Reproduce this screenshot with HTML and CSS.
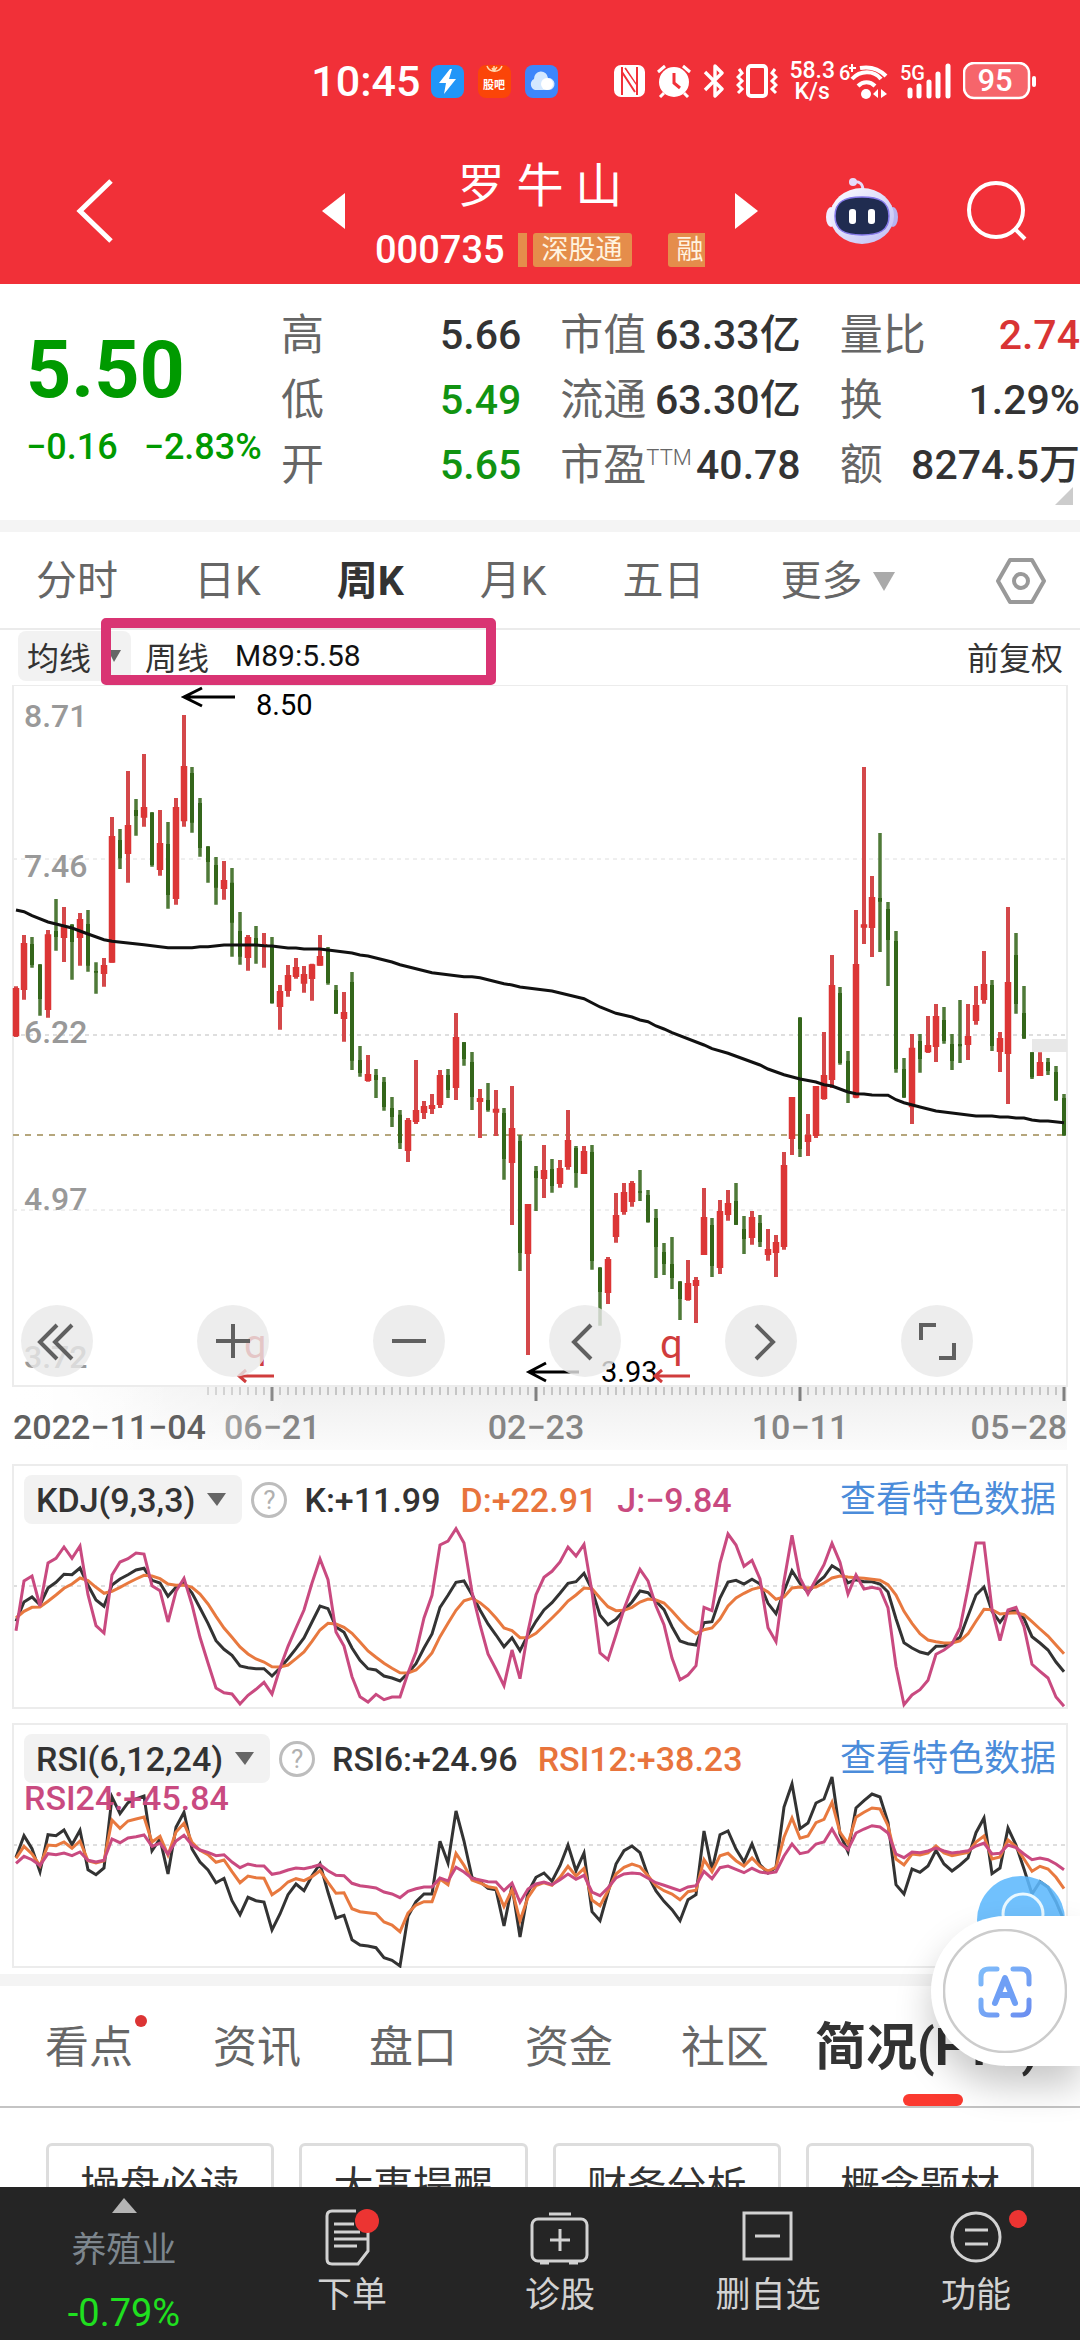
FILE: index.html
```html
<!DOCTYPE html>
<html lang="zh-CN">
<head>
<meta charset="utf-8">
<meta name="viewport" content="width=device-width, initial-scale=1">
<title>罗牛山 000735</title>
<link rel="stylesheet" href="styles.css">
</head>
<body>
<header class="top">
  <div class="status">
    <div class="status-left">
      <span class="clock">10:45</span>
      <svg class="app" viewBox="0 0 33 33"><rect width="33" height="33" rx="8" fill="#2196f8"/><path d="M19 4 8 18h7l-2 11 12-15h-7l3-10z" fill="#fff"/></svg>
      <svg class="app" viewBox="0 0 33 33"><rect width="33" height="33" rx="8" fill="#fb4508"/><path d="M9 1a8 8 0 0 0 15 0M16 1v6m-2-4 2 3 3-4" fill="none" stroke="#ffd9b0" stroke-width="1.5"/><text x="16" y="24" class="app-label">股吧</text></svg>
      <svg class="app" viewBox="0 0 33 33"><rect width="33" height="33" rx="8" fill="#3d86fb"/><path d="M10 25a6 6 0 0 1-1-11 7 7 0 0 1 14-1 6 6 0 0 1 1 12z" fill="#d4e8ff"/><circle cx="22" cy="19" r="6" fill="#fff"/></svg>
    </div>
    <div class="status-right">
      <svg width="31" height="32" viewBox="0 0 31 32"><rect width="31" height="32" rx="7" fill="#fff"/><path d="M8 2v28M23 30V2M8 7l13 20M11 3l12 18" fill="none" stroke="#f13038" stroke-width="2"/><path d="m10 5 12 20v-5L10 3z" fill="#fff"/></svg>
      <svg width="36" height="34" viewBox="0 0 36 34"><circle cx="18" cy="18" r="15" fill="#fff"/><path d="m2 8 7-6m18 0 7 6M8 29l-4 4m24-4 4 4" stroke="#fff" stroke-width="3"/><path d="M18 9v10l6 5" fill="none" stroke="#f13038" stroke-width="3"/></svg>
      <svg width="22" height="34" viewBox="0 0 22 34"><path d="m2 8 17 17-7 7V2l7 7L2 26" fill="none" stroke="#fff" stroke-width="3.4" stroke-linejoin="round"/></svg>
      <svg width="42" height="34" viewBox="0 0 42 34"><rect x="12" y="2" width="18" height="30" rx="3" fill="none" stroke="#fff" stroke-width="4"/><path d="m3 5 3 4-4 4 4 4-4 4 4 4-4 4M39 5l-3 4 4 4-4 4 4 4-4 4 4 4" fill="none" stroke="#fff" stroke-width="3"/></svg>
      <span class="speed">58.3<br>K/s</span>
      <svg width="50" height="38" viewBox="0 0 50 38"><text x="0" y="18" class="tiny">6</text><path d="M10 6h7M13 2v8" stroke="#fff" stroke-width="2"/><path d="M21 6c11-2 20 2 26 8M13 17c8-9 22-9 29 0M19 24c5-5 12-5 17 0" fill="none" stroke="#fff" stroke-width="4"/><circle cx="27" cy="32" r="5" fill="#fff"/><path d="m39 27v9l-5-4zm3 0v9l6-4z" fill="#fff"/></svg>
      <svg width="52" height="38" viewBox="0 0 52 38"><text x="0" y="18" class="tiny">5G</text><path d="M10 28v6M19 24v10M29 20v14M38 12v22M48 4v30" stroke="#fff" stroke-width="5" stroke-linecap="round"/></svg>
      <svg width="74" height="38" viewBox="0 0 74 38"><rect x="1" y="1" width="65" height="35" rx="10" fill="#f6656b" stroke="#fff" stroke-width="2.5"/><rect x="69" y="14" width="4" height="11" rx="2" fill="#fff"/><text x="32" y="29" class="battery">95</text></svg>
    </div>
  </div>
  <div class="title-bar">
    <button class="bare back" aria-label="返回"><svg width="38" height="66" viewBox="0 0 38 66"><path d="M35 3 4 33l31 30" fill="none" stroke="#fff" stroke-width="5"/></svg></button>
    <div class="stock">
      <button class="bare" aria-label="上一只"><svg width="23" height="36" viewBox="0 0 23 36"><path d="M23 0v36L0 18z" fill="#fff"/></svg></button>
      <div class="stock-name">
        <h1>罗 牛 山</h1>
        <div class="stock-sub"><span class="code">000735</span><i class="sliver"></i><span class="tag">深股通</span><span class="tag tag-next">融</span></div>
      </div>
      <button class="bare" aria-label="下一只"><svg width="23" height="36" viewBox="0 0 23 36"><path d="M0 0v36l23-18z" fill="#fff"/></svg></button>
    </div>
    <div class="actions">
      <button class="bare" aria-label="智能助手"><svg width="72" height="66" viewBox="0 0 72 66">
        <defs><linearGradient id="shell" x1="0" x2="1" y1="0" y2="1"><stop offset="0" stop-color="#fff"/><stop offset="1" stop-color="#bdbcf5"/></linearGradient></defs>
        <circle cx="27" cy="4" r="4" fill="#e6dcfa"/><path d="M27 4c7-1 10 2 10 9" fill="none" stroke="#e6dcfa" stroke-width="3"/>
        <ellipse cx="5" cy="39" rx="5" ry="10" fill="#f2ecff"/><ellipse cx="67" cy="39" rx="5" ry="10" fill="#b6b4f0"/>
        <ellipse cx="36" cy="38" rx="32" ry="28" fill="url(#shell)"/>
        <path d="M9 38c0-14 9-19 27-19s27 5 27 19-9 19-27 19S9 52 9 38z" fill="#202c50" stroke="#8579ea" stroke-width="1.5"/>
        <rect x="23" y="31" width="7" height="15" rx="3" fill="#fff"/><rect x="42" y="31" width="7" height="15" rx="3" fill="#fff"/></svg></button>
      <button class="bare" aria-label="搜索"><svg width="60" height="60" viewBox="0 0 60 60"><circle cx="29" cy="29" r="27" fill="none" stroke="#fff" stroke-width="4"/><path d="m47 47 11 11" stroke="#fff" stroke-width="4"/></svg></button>
    </div>
  </div>
</header>

<main>
<section class="quote">
  <div class="price">
    <strong>5.50</strong>
    <div class="change"><span>−0.16</span><span>−2.83%</span></div>
  </div>
  <dl>
    <div><dt>高</dt><dd>5.66</dd></div>
    <div><dt>低</dt><dd class="down">5.49</dd></div>
    <div><dt>开</dt><dd class="down">5.65</dd></div>
  </dl>
  <dl>
    <div><dt>市值</dt><dd>63.33亿</dd></div>
    <div><dt>流通</dt><dd>63.30亿</dd></div>
    <div><dt>市盈<sup>TTM</sup></dt><dd>40.78</dd></div>
  </dl>
  <dl>
    <div><dt>量比</dt><dd class="up">2.74</dd></div>
    <div><dt>换</dt><dd>1.29%</dd></div>
    <div><dt>额</dt><dd>8274.5万</dd></div>
  </dl>
  <i class="corner"></i>
</section>

<nav class="periods">
  <button class="bare">分时</button>
  <button class="bare">日K</button>
  <button class="bare active">周K</button>
  <button class="bare">月K</button>
  <button class="bare">五日</button>
  <button class="bare more">更多<svg width="22" height="19" viewBox="0 0 22 19"><path d="M0 0h22L11 19z" fill="#aaa"/></svg></button>
  <button class="bare settings" aria-label="设置"><svg width="50" height="48" viewBox="0 0 50 48"><path d="M14 3h22l12 21-12 21H14L2 24z" fill="none" stroke="#999" stroke-width="4" stroke-linejoin="round"/><circle cx="25" cy="24" r="7" fill="none" stroke="#999" stroke-width="4"/></svg></button>
</nav>

<div class="ma-bar">
  <button class="bare chip ma-chip">均线<svg width="13" height="12" viewBox="0 0 13 12"><path d="M0 0h13L6 12z" fill="#666"/></svg></button>
  <span class="ma-period">周线</span>
  <span class="ma-value">M89:5.58</span>
  <button class="bare adjust">前复权</button>
  <i class="highlight"></i>
</div>

<section class="price-chart">
  <svg class="plot" id="price" viewBox="0 0 1080 765">
    <defs>
      <linearGradient id="fade" x1="0" x2="0" y1="0" y2="1"><stop offset="0" stop-color="#eee"/><stop offset="1" stop-color="#fbfbfb"/></linearGradient>
      <linearGradient id="veil" x1="0" x2="1" y1="0" y2="0"><stop offset="0" stop-color="#fff"/><stop offset="1" stop-color="#fff" stop-opacity="0"/></linearGradient>
    </defs>
    <rect x="13" y="700" width="1054" height="65" fill="url(#fade)"/>
    <g id="ticks" stroke="#999"></g>
    <text x="224" y="754" class="date light">06−21</text>
    <rect x="13" y="701" width="280" height="64" fill="url(#veil)"/>
    <rect x="13" y="701" width="160" height="64" fill="url(#veil)"/>
    <g class="grid"><path d="M13 174h1054M13 525h1054" stroke-width="1"/><path d="M13 350h1054" stroke-width="2"/></g>
    <rect x="13" y="0" width="1054" height="701" class="frame"/>
    <text x="24" y="42" class="level">8.71</text>
    <text x="24" y="192" class="level">7.46</text>
    <text x="24" y="358" class="level">6.22</text>
    <text x="24" y="525" class="level">4.97</text>
    <text x="24" y="683" class="level">3.72</text>
    <path d="M13 450h1054" stroke="#b5a67c" stroke-width="2" stroke-dasharray="6 6"/>
    <rect x="1032" y="354" width="35" height="13" fill="#e8e8e8"/>
    <g id="candles"></g>
    <g fill="none" stroke="#000" stroke-width="3"><path d="M235 12h-51m18-9-18 9 18 9"/><path d="M579 687h-50m17-9-17 9 17 9"/></g>
    <text x="256" y="30" class="mark">8.50</text>
    <text x="601" y="697" class="mark">3.93</text>
    <g fill="none" stroke="#d03c3c" stroke-width="3"><path d="M274 691h-35m7-6-7 6 7 6"/><path d="M690 691h-35m7-6-7 6 7 6"/></g>
    <text x="244" y="673" class="event">q</text>
    <text x="660" y="673" class="event">q</text>
    <text x="13" y="754" class="date">2022−11−04</text>
    <text x="536" y="754" class="date light mid">02−23</text>
    <text x="800" y="754" class="date light mid">10−11</text>
    <text x="1067" y="754" class="date light end">05−28</text>
  </svg>
  <div class="controls">
    <button class="bare" aria-label="最左"><svg viewBox="0 0 72 72"><path d="M36 20 19 37l17 17M51 20 34 37l17 17"/></svg></button>
    <button class="bare" aria-label="放大"><svg viewBox="0 0 72 72"><path d="M19 36h34M36 19v34"/></svg></button>
    <button class="bare" aria-label="缩小"><svg viewBox="0 0 72 72"><path d="M19 36h34"/></svg></button>
    <button class="bare" aria-label="左移"><svg viewBox="0 0 72 72"><path d="M42 20 25 37l17 17"/></svg></button>
    <button class="bare" aria-label="右移"><svg viewBox="0 0 72 72"><path d="m31 20 17 17-17 17"/></svg></button>
    <button class="bare" aria-label="全屏"><svg viewBox="0 0 72 72"><path d="M35 20H20v15M53 38v15H38"/></svg></button>
  </div>
</section>

<section class="panel">
  <svg class="plot" id="kdj" viewBox="0 0 1080 245"><g class="grid"><path d="M13 122h1054" stroke-width="2"/></g><rect x="13" y="1" width="1054" height="243" class="frame"/></svg>
  <div class="legend">
    <button class="bare chip">KDJ(9,3,3)<svg width="19" height="13" viewBox="0 0 19 13"><path d="M0 0h19L10 13z" fill="#666"/></svg></button>
    <button class="help" aria-label="说明">?</button>
    <span>K:+11.99</span><span class="orange">D:+22.91</span><span class="purple">J:−9.84</span>
    <a class="feature" href="#kdj">查看特色数据</a>
  </div>
</section>

<section class="panel">
  <svg class="plot" id="rsi" viewBox="0 0 1080 245"><g class="grid"><path d="M13 122h1054" stroke-width="2"/></g><rect x="13" y="1" width="1054" height="243" class="frame"/></svg>
  <div class="legend">
    <button class="bare chip">RSI(6,12,24)<svg width="19" height="13" viewBox="0 0 19 13"><path d="M0 0h19L10 13z" fill="#666"/></svg></button>
    <button class="help" aria-label="说明">?</button>
    <span>RSI6:+24.96</span><span class="orange">RSI12:+38.23</span>
    <a class="feature" href="#rsi">查看特色数据</a>
    <span class="purple second-line">RSI24:+45.84</span>
  </div>
</section>

<nav class="topics">
  <button class="bare has-dot">看点</button>
  <button class="bare">资讯</button>
  <button class="bare">盘口</button>
  <button class="bare">资金</button>
  <button class="bare">社区</button>
  <button class="bare active">简况(F10)</button>
</nav>

<div class="cards">
  <button>操盘必读</button>
  <button>大事提醒</button>
  <button>财务分析</button>
  <button>概念题材</button>
</div>
</main>

<button class="bare helper" aria-label="客服"><svg width="88" height="88" viewBox="0 0 88 88"><circle cx="44" cy="44" r="44" fill="#5db8fd" opacity=".88"/><circle cx="46" cy="38" r="20" fill="none" stroke="#e9f8ff" stroke-width="3"/></svg></button>
<button class="bare scan" aria-label="识别文字"><svg width="124" height="124" viewBox="0 0 124 124">
  <defs><linearGradient id="blue" x1="0" x2="1" y1="0" y2="1"><stop offset="0" stop-color="#7fbcfa"/><stop offset="1" stop-color="#6b8ef0"/></linearGradient></defs>
  <circle cx="62" cy="62" r="61" fill="none" stroke="#ccc" stroke-width="2.5"/>
  <g fill="none" stroke="url(#blue)" stroke-width="5" stroke-linecap="round"><path d="M54 40h-8q-8 0-8 8v7M70 40h8q8 0 8 8v7M38 71v7q0 8 8 8h8M86 71v7q0 8-8 8h-8"/><path d="m52 74 10-25 10 25M56 66h12" stroke-width="6" stroke="#6f9ff5" stroke-linejoin="round"/></g></svg></button>

<nav class="bottom">
  <a class="industry" href="#industry"><svg width="25" height="15" viewBox="0 0 25 15"><path d="M12 0l13 15H0z" fill="#b4b4b4"/></svg><span>养殖业</span><b>-0.79%</b></a>
  <a href="#order"><svg viewBox="0 0 60 60"><path d="M46 23v19L36 55H10q-5 0-5-5V7q0-5 5-5h24" class="line"/><path d="M12 15h20M12 23h26M12 30h33M12 37h23" class="line"/><circle cx="45" cy="12" r="12" fill="#ec3432"/></svg><span>下单</span></a>
  <a href="#diagnose"><svg viewBox="0 0 60 60"><rect x="2" y="10" width="55" height="42" rx="6" class="line"/><path d="M19 5h22M30 20v22M20 31h20M10 54h9M39 54h9" class="line"/></svg><span>诊股</span></a>
  <a href="#remove"><svg viewBox="0 0 60 60"><path d="M6 4h47v46H6zM17 27h25" class="line"/></svg><span>删自选</span></a>
  <a href="#more"><svg viewBox="0 0 60 60" overflow="visible"><circle cx="30" cy="28" r="24" class="line"/><path d="M19 21h23M19 35h23" class="line"/><circle cx="72" cy="10" r="9" fill="#ec3432"/></svg><span>功能</span></a>
</nav>
<script src="chart.js"></script>
</body>
</html>
```

FILE: chart.js
```js
// Rows of "colour high low bodyTop bodyBottom"; three data units make one plot unit.
const CANDLES = `
r 922 1074 927 1072,r 768 962 792 933,g 774 866 795 858,g 855 1010 857 960,r 753 1016 766 993,
g 660 815 756 774,r 684 849 741 777,g 735 902 738 789,r 702 860 720 777,g 693 878 735 860,
g 850 944 876 881,r 837 923 858 885,r 414 851 471 851,g 450 570 483 538,r 276 611 438 525,
g 360 470 393 411,r 225 443 384 416,g 399 563 401 558,r 393 590 492 573,g 429 689 495 648,
r 357 677 384 660,r 108 443 261 427,g 264 461 282 431,g 357 533 372 507,g 501 611 503 549,
g 534 677 558 626,r 546 662 603 630,g 567 833 611 731,g 699 857 756 833,r 768 875 774 837,
g 741 854 777 800,r 762 866 795 801,g 774 974 800 972,r 918 1052 936 984,r 858 953 888 936,
r 837 899 864 894,r 861 941 885 914,r 854 965 856 900,r 768 860 831 860,g 804 917 812 912,
g 918 1004 933 1004,r 939 1088 999 1020,g 879 1173 909 1145,g 1101 1193 1143 1182,r 1128 1208 1185 1206,
g 1170 1257 1188 1203,g 1194 1295 1209 1284,g 1254 1344 1287 1314,g 1293 1410 1307 1392,r 1317 1449 1323 1416,
r 1143 1335 1293 1329,r 1266 1320 1281 1302,r 1245 1305 1278 1290,r 1173 1287 1188 1278,g 1170 1257 1188 1233,
r 1002 1263 1074 1227,g 1089 1160 1090 1140,g 1119 1293 1149 1254,r 1230 1377 1257 1269,g 1212 1298 1263 1293,
r 1233 1371 1289 1301,g 1287 1502 1302 1440,r 1221 1638 1347 1452,g 1368 1776 1386 1722,r 1575 2028 1575 1725,
g 1461 1596 1476 1497,r 1398 1557 1473 1500,g 1440 1541 1470 1521,r 1443 1526 1467 1515,r 1293 1472 1383 1464,
g 1401 1526 1407 1482,r 1401 1485 1416 1485,g 1398 1772 1419 1746,g 1764 1940 1767 1839,r 1734 1875 1740 1842,
r 1542 1691 1608 1674,r 1512 1607 1539 1599,r 1506 1583 1512 1569,g 1473 1566 1537 1541,g 1533 1631 1548 1629,
g 1590 1797 1617 1704,g 1692 1788 1719 1755,g 1674 1830 1755 1797,g 1806 1923 1808 1860,r 1743 1865 1812 1863,
r 1794 1932 1803 1821,r 1527 1728 1614 1728,g 1617 1794 1638 1761,r 1563 1785 1596 1767,r 1533 1625 1572 1608,
g 1512 1638 1566 1637,g 1611 1725 1650 1680,r 1596 1697 1614 1677,g 1608 1704 1632 1689,r 1650 1745 1710 1728,
r 1668 1794 1689 1722,r 1419 1712 1458 1704,r 1254 1428 1254 1380,g 1014 1434 1017 1410,r 1305 1431 1368 1389,
r 1221 1377 1221 1371,r 1059 1262 1188 1260,r 828 1227 918 1203,g 924 1157 942 1152,g 1116 1272 1146 1240,
r 693 1258 855 1256,r 264 795 736 746,r 591 834 654 747,g 462 819 657 668,g 669 921 690 783,
g 756 1181 786 1170,g 1137 1257 1170 1255,r 1065 1335 1106 1285,g 1065 1181 1086 1140,r 1011 1122 1098 1120,
r 975 1149 1011 1104,g 984 1094 1023 1086,g 1065 1173 1095 1146,g 963 1152 1095 1102,r 975 1143 1071 1098,
r 921 1037 978 1026,r 816 974 915 963,g 903 1116 918 1101,r 1059 1179 1077 1119,r 684 1275 909 1125,
g 762 1004 828 975,g 921 1080 1002 1078,g 1120 1200 1120 1195,r 1120 1191 1149 1191,g 1137 1188 1149 1176,
g 1161 1266 1179 1263,g 1245 1371 1257 1368`.trim().split(/,\s*/).map(row => row.split(' '));

// 89-week average as "week:value" knots.
const MA89 = '0:693 1:698 2:710 4:729 5:735 7:747 9:765 11:782 12:787 16:797 19:806 22:806 23:803 24:803 26:798 30:798 31:800 32:801 34:807 35:807 36:810 38:810 39:813 42:822 43:828 44:831 47:849 48:857 52:881 56:893 57:893 58:896 61:914 62:918 63:924 66:933 67:936 71:959 73:984 75:1003 77:1014 78:1023 79:1028 80:1041 81:1050 82:1061 86:1098 87:1109 89:1123 93:1158 94:1170 96:1187 98:1200 100:1209 101:1217 102:1221 104:1239 105:1244 106:1245 107:1248 109:1249 110:1262 111:1271 113:1284 115:1296 120:1311 122:1311 123:1314 124:1314 125:1317 126:1317 127:1323 128:1326 129:1326 131:1331';

const KDJ = {
  '#333': '520 462 447 471 420 403 379 380 360 412 456 475 411 393 380 366 361 397 405 445 418 405 435 480 526 578 604 622 654 659 662 662 684 660 632 602 570 522 474 482 537 553 600 637 662 666 684 690 699 675 647 600 558 478 442 403 399 440 486 528 561 596 569 608 560 520 486 464 436 406 401 376 425 502 530 514 487 462 429 434 460 485 536 579 587 591 524 521 450 402 397 408 394 408 466 497 430 368 406 433 407 387 353 368 405 395 401 401 408 432 512 584 600 612 618 595 594 585 568 504 441 417 490 523 490 488 512 566 585 606 642 671',
  '#e8793f': '510 490 478 477 460 441 421 408 390 398 418 436 430 418 405 393 382 384 392 408 412 411 418 438 468 505 540 568 597 618 633 642 656 657 651 632 612 580 546 526 528 538 556 582 609 628 646 661 674 675 666 643 615 566 526 487 458 451 464 484 510 540 548 569 569 556 533 510 486 459 441 420 422 450 476 488 487 478 462 453 456 465 489 516 540 557 545 540 513 474 450 436 424 418 432 454 447 420 417 420 417 405 390 384 387 389 391 394 397 410 441 490 526 557 576 581 585 585 579 557 520 484 485 498 496 494 500 521 543 564 591 617',
  '#c94a80': '548 399 384 474 345 331 297 331 294 440 533 555 381 342 332 315 318 413 428 522 430 391 470 568 645 720 734 738 768 742 724 703 738 660 595 540 486 405 333 395 552 594 686 746 762 739 755 747 747 675 612 510 442 291 279 242 285 432 530 618 664 713 606 692 550 440 388 370 342 297 324 289 432 615 635 560 483 420 364 399 474 530 630 695 681 653 478 488 345 258 291 355 337 393 539 581 400 262 390 438 394 350 286 343 438 381 423 418 423 480 655 770 741 725 697 619 606 588 540 420 285 285 483 578 486 478 536 649 670 690 747 775'
};

const RSI = {
  '#333': '445 380 419 488 377 380 363 407 364 482 497 477 264 314 281 270 261 425 390 495 355 310 420 459 483 521 508 575 617 565 575 579 663 615 557 525 545 500 464 550 627 619 692 708 711 716 746 754 771 622 578 555 555 397 462 306 396 505 518 538 542 651 530 684 550 505 492 517 470 408 485 432 608 635 550 465 425 411 431 500 546 577 602 635 572 557 366 483 377 366 420 459 405 467 492 475 294 225 359 342 282 270 204 375 428 297 275 255 264 340 527 555 480 490 471 424 465 486 468 447 371 327 494 477 357 408 480 555 518 535 578 635',
  '#e8793f': '448 412 435 470 408 410 399 418 396 455 462 455 333 358 336 330 324 399 382 438 369 343 400 424 437 460 453 488 521 501 506 508 557 541 519 509 515 503 485 520 553 551 599 608 611 614 639 648 668 612 588 578 578 510 527 433 469 513 522 533 537 593 542 635 565 530 521 529 505 472 501 478 573 590 545 495 475 465 473 500 530 545 555 572 548 544 452 488 440 433 455 471 447 472 486 475 385 327 388 381 341 331 280 370 404 325 310 297 300 350 450 468 435 438 432 411 432 440 435 430 399 381 450 444 393 413 450 487 472 480 505 539',
  '#c94a80': '463 442 452 469 434 437 432 440 429 454 459 454 390 401 387 383 378 412 402 435 396 379 408 423 430 440 437 459 476 465 470 471 496 491 483 477 479 474 467 485 499 500 523 530 533 537 549 555 566 547 539 534 534 507 516 475 489 508 513 518 519 545 522 580 540 525 519 527 512 495 511 499 549 560 536 507 495 492 494 508 521 529 537 545 534 530 487 509 476 471 481 491 478 489 493 489 441 405 434 429 405 399 360 402 422 372 360 350 354 372 435 446 429 431 426 417 426 432 429 425 411 402 435 433 408 416 435 452 447 452 465 482'
};

const x = week => 16 + week * 8;

function addPath(parent, d, stroke, width) {
  const path = document.createElementNS('http://www.w3.org/2000/svg', 'path');
  path.setAttribute('d', d);
  path.setAttribute('fill', 'none');
  path.setAttribute('stroke', stroke);
  path.setAttribute('stroke-width', width);
  parent.append(path);
}

function drawLines(id, series, top) {
  for (const [colour, values] of Object.entries(series)) {
    const points = values.split(' ').map((v, i) => `${x(i)} ${(v / 3 - top).toFixed(1)}`);
    addPath(document.getElementById(id), 'M' + points.join('L'), colour, 3);
  }
}

function candlePath(colour, from, to) {
  return CANDLES.map((c, i) => c[0] === colour
    ? `M${x(i)} ${(c[from] / 3 - 6).toFixed(1)}V${(c[to] / 3 - 6).toFixed(1)}` : '').join('');
}

const candles = document.getElementById('candles');
addPath(candles, candlePath('r', 1, 2), '#d4484a', 4);
addPath(candles, candlePath('g', 1, 2), '#4f7a38', 3.5);
addPath(candles, candlePath('r', 3, 4), '#dc3535', 6.5);
addPath(candles, candlePath('g', 3, 4), '#34661b', 4);
addPath(candles, 'M' + MA89.split(' ').map(knot => {
  const [week, v] = knot.split(':');
  return `${x(+week)} ${(v / 3 - 6).toFixed(1)}`;
}).join('L'), '#111', 3);

const ticks = document.getElementById('ticks');
for (let i = 24; i < 132; i++) {
  const month = (i - 32) % 33 === 0;
  addPath(ticks, `M${x(i)} 701V${month ? 716 : 710}`, month ? '#808080' : '#9a9a9a', month ? 3 : 1);
}

drawLines('kdj', KDJ, 16);
drawLines('rsi', RSI, 14);
```

FILE: styles.css
```css
* { box-sizing: border-box; }

body {
  margin: 0;
  background: #fff;
  color: #333;
  font-family: Roboto, "Noto Sans CJK SC", sans-serif;
}

.bare {
  margin: 0;
  padding: 0;
  border: 0;
  background: none;
  color: inherit;
  font: inherit;
}

button { cursor: pointer; }
svg { display: block; flex: none; }
h1, dl, dt, dd { margin: 0; }

/* header */
.top { background: #f13038; color: #fff; padding-bottom: 17px; }

.status {
  display: flex;
  justify-content: flex-end;
  align-items: center;
  gap: 56px;
  height: 102px;
  padding: 60px 43px 0 0;
}
.status-left { display: flex; align-items: center; gap: 14px; }
.status-left .clock { margin-right: -3px; }
.status-right { display: flex; align-items: center; gap: 11px; }
.clock { font-size: 43px; line-height: 42px; font-weight: 500; }
.app { width: 33px; height: 33px; }
.app-label { font-size: 11px; font-weight: 700; fill: #fff; text-anchor: middle; }
.speed { margin-right: -7px; font-size: 23px; line-height: 21px; font-weight: 500; text-align: center; }
.tiny { font-size: 20px; font-weight: 500; fill: #fff; }
.battery { font-size: 31px; font-weight: 500; fill: #fff; text-anchor: middle; }

.title-bar {
  display: grid;
  grid-template-columns: 1fr auto 1fr;
  align-items: center;
  padding: 52px 53px 0;
}
.back { justify-self: start; margin-left: 23px; }
.stock { display: flex; align-items: center; gap: 30px; }
.stock-name { width: 330px; }
.stock h1 { font-size: 47px; line-height: 64px; font-weight: 400; text-align: center; }
.stock-sub { display: flex; align-items: center; height: 34px; margin-top: 15px; overflow: hidden; }
.code { font-size: 38px; line-height: 34px; font-weight: 500; margin-right: 13px; }
.sliver { flex: none; width: 9px; height: 34px; margin-right: 6px; background: #e58d4b; }
.tag {
  flex: none;
  padding: 0 9px;
  border-radius: 3px;
  background: #e58d4b;
  color: #fff3e0;
  font-size: 27px;
  line-height: 34px;
}
.tag-next { margin-left: 36px; }
.actions { display: flex; justify-content: flex-end; align-items: center; gap: 69px; }

/* quote */
.quote {
  position: relative;
  display: grid;
  grid-template-columns: 242px 1fr 1fr 1fr;
  column-gap: 39px;
  padding: 19px 0 22px;
  border-bottom: 12px solid #f4f4f4;
  box-sizing: content-box;
}
.price { padding: 25px 0 0 26px; color: #009a00; white-space: nowrap; }
.price strong { display: block; font-size: 79px; line-height: 84px; font-weight: 700; }
.change { display: flex; gap: 26px; font-size: 36px; line-height: 70px; font-weight: 500; }
.quote dl div { display: flex; justify-content: space-between; height: 65px; line-height: 65px; white-space: nowrap; }
.quote dt { font-size: 43px; color: #666; display: flex; }
.quote sup { font-size: 22px; line-height: 50px; font-weight: 300; }
.quote dd { font-size: 41px; font-weight: 500; }
.quote dd.down { color: #119311; }
.quote dd.up { color: #d93434; }
.corner {
  position: absolute;
  right: 7px;
  bottom: 15px;
  border-left: 18px solid transparent;
  border-bottom: 18px solid #ccc;
}

/* period tabs */
.periods {
  display: flex;
  align-items: center;
  gap: 76px;
  height: 98px;
  padding: 2px 34px 0 36px;
  border-bottom: 2px solid #ebebeb;
  color: #666;
  font-size: 41px;
  line-height: 60px;
}
.periods .active { color: #333; font-weight: 700; }
.more { display: flex; align-items: center; gap: 10px; }
.settings { margin-left: auto; }

.ma-bar {
  position: relative;
  display: flex;
  align-items: center;
  height: 55px;
  padding: 0 17px 4px 18px;
  font-size: 32px;
}
.chip { display: flex; align-items: center; background: #f2f2f2; border-radius: 8px; }
.ma-chip { gap: 17px; height: 50px; padding: 0 10px 0 9px; }
.ma-period { margin: 0 26px 0 14px; }
.ma-value { color: #111; font-size: 30px; }
.adjust { margin-left: auto; }
.highlight {
  position: absolute;
  left: 101px;
  top: -12px;
  width: 395px;
  height: 67px;
  border: 10px solid #d93473;
  border-radius: 5px;
}

/* charts */
.plot { width: 100%; height: auto; }
.price-chart { position: relative; }
.frame { fill: none; stroke: #ececec; stroke-width: 2; }
.grid { stroke: #dedede; stroke-dasharray: 4 4; }
.level { font-size: 32px; font-weight: 500; fill: #999; }
.mark { font-size: 29px; fill: #000; }
.event { font-size: 40px; fill: #d03c3c; }
.date { font-size: 34px; font-weight: 500; fill: #606060; }
.date.light { fill: #858585; }
.mid { text-anchor: middle; }
.end { text-anchor: end; }

.controls {
  position: absolute;
  left: 21px;
  right: 107px;
  bottom: 73px;
  display: flex;
  justify-content: space-between;
}
.controls button { width: 72px; height: 72px; border-radius: 50%; background: rgba(232, 232, 232, .8); }
.controls path { fill: none; stroke: #606060; stroke-width: 4; }

.panel { position: relative; margin-top: 14px; }
.legend {
  position: absolute;
  left: 24px;
  right: 24px;
  top: 11px;
  display: flex;
  align-items: center;
  font-size: 34px;
  font-weight: 500;
  line-height: 48px;
}
.legend .chip { gap: 12px; height: 49px; padding: 0 16px 0 12px; }
.legend span { margin-left: 20px; }
.legend .help + span { margin-left: 17px; }
.legend .orange { color: #e8743c; }
.legend .purple { color: #c94a80; }
.legend .second-line { position: absolute; left: 0; top: 40px; margin: 0; }
.help {
  width: 36px;
  height: 36px;
  margin-left: 9px;
  padding: 0;
  border: 3px solid #bdbdbd;
  border-radius: 50%;
  background: none;
  color: #b0b0b0;
  font: 26px/30px Roboto, sans-serif;
}
.feature { margin-left: auto; color: #4b8cda; font-size: 36px; font-weight: 400; text-decoration: none; }

/* topic tabs */
.topics {
  display: flex;
  align-items: center;
  gap: 68px;
  height: 134px;
  margin-top: 6px;
  padding: 4px 0 0 45px;
  border-top: 12px solid #f4f4f4;
  border-bottom: 2px solid #c4c4c4;
  color: #666;
  font-size: 44px;
  line-height: 60px;
  white-space: nowrap;
}
.topics button { position: relative; }
.has-dot { margin-right: 12px; }
.has-dot::after {
  content: "";
  position: absolute;
  right: -14px;
  top: -3px;
  width: 12px;
  height: 12px;
  border-radius: 50%;
  background: #dc3434;
}
.topics .active { margin-left: -22px; color: #333; font-size: 51px; font-weight: 700; }
.topics .active::after {
  content: "";
  position: absolute;
  left: 50%;
  bottom: -28px;
  width: 60px;
  height: 12px;
  margin-left: -24px;
  border-radius: 6px;
  background: #fb3a30;
}

.cards {
  display: grid;
  grid-template-columns: repeat(4, 1fr);
  gap: 25px;
  padding: 35px 46px 0;
}
.cards button {
  height: 88px;
  padding: 0;
  border: 3px solid #ddd;
  border-radius: 6px;
  background: #fff;
  color: #333;
  font: 40px/56px Roboto, "Noto Sans CJK SC", sans-serif;
}

/* floating buttons */
.helper { position: fixed; right: 15px; bottom: 376px; }
.scan {
  position: fixed;
  right: 0;
  bottom: 274px;
  width: 149px;
  height: 150px;
  padding-left: 12px;
  border-radius: 75px 0 0 75px;
  background: #fff;
  box-shadow: 0 20px 36px rgba(0, 0, 0, .22);
}

/* bottom bar */
.bottom {
  position: fixed;
  left: 0;
  right: 0;
  bottom: 0;
  display: flex;
  height: 153px;
  background: #252525;
  color: #d2d2d2;
  font-size: 35px;
}
.bottom a {
  flex: 208 1 0;
  display: flex;
  flex-direction: column;
  align-items: center;
  padding-top: 22px;
  color: inherit;
  text-decoration: none;
  line-height: 44px;
}
.bottom a svg { width: 60px; height: 60px; margin-bottom: 5px; }
.bottom a.industry { flex-grow: 248; padding-top: 11px; }
.bottom .industry svg { width: 25px; height: 15px; margin-bottom: 16px; }
.industry span { color: #7d868e; }
.industry b { margin-top: 18px; color: #1fe01f; font-size: 38px; font-weight: 400; }
.line { fill: none; stroke: #d2d2d2; stroke-width: 3; }
```
